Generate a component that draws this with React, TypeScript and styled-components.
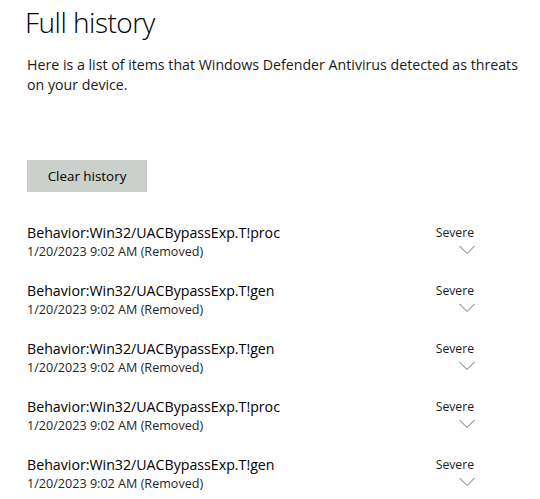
import React from "react";
import styled, { createGlobalStyle } from "styled-components";

const Global = createGlobalStyle`
  html, body { margin: 0; padding: 0; background: #ffffff; }
  body { font-family: "Open Sans", "Noto Sans", Arial, sans-serif; color: #000; }
`;

const Page = styled.div`
  width: 540px;
  height: 499px;
  overflow: hidden;
  box-sizing: border-box;
  padding: 0 0 0 27px;
  display: flex;
  flex-direction: column;
`;

const Title = styled.h1`
  margin: 4px 0 0 -2px;
  font-size: 28px;
  font-weight: 300;
  line-height: 36px;
  letter-spacing: -0.5px;
  color: #000;
`;

const Description = styled.p`
  margin: 15px 0 0 0;
  width: 500px;
  font-size: 14.2px;
  line-height: 20px;
  color: #1a1a1a;
`;

const ClearButton = styled.button`
  margin-top: 65px;
  width: 120px;
  height: 32px;
  border: none;
  background: #ccd0cc;
  font-family: inherit;
  font-size: 13.4px;
  color: #000;
  padding: 0;
`;

const List = styled.div`
  margin-top: 31px;
  display: flex;
  flex-direction: column;
`;

const Row = styled.div`
  display: flex;
  justify-content: space-between;
  height: 58px;
  width: 448px;
`;

const Info = styled.div`
  display: flex;
  flex-direction: column;
`;

const ThreatName = styled.div`
  font-size: 14.2px;
  line-height: 20px;
  color: #000;
`;

const ThreatDate = styled.div`
  font-size: 12.6px;
  line-height: 18px;
  color: #262626;
`;

const Side = styled.div`
  display: flex;
  flex-direction: column;
  align-items: flex-end;
`;

const Severity = styled.div`
  font-size: 12.2px;
  line-height: 18px;
  color: #1a1a1a;
  margin-top: 1px;
  margin-right: 1px;
`;

const Chevron = styled.svg`
  width: 16px;
  height: 10px;
  margin-top: 3px;
`;

const items = [
  "Behavior:Win32/UACBypassExp.T!proc",
  "Behavior:Win32/UACBypassExp.T!gen",
  "Behavior:Win32/UACBypassExp.T!gen",
  "Behavior:Win32/UACBypassExp.T!proc",
  "Behavior:Win32/UACBypassExp.T!gen",
];

export default function App() {
  return (
    <>
      <Global />
      <Page>
        <Title>Full history</Title>
        <Description>
          Here is a list of items that Windows Defender Antivirus detected as threats on your device.
        </Description>
        <div>
          <ClearButton>Clear history</ClearButton>
        </div>
        <List>
          {items.map((name, i) => (
            <Row key={i}>
              <Info>
                <ThreatName>{name}</ThreatName>
                <ThreatDate>1/20/2023 9:02 AM (Removed)</ThreatDate>
              </Info>
              <Side>
                <Severity>Severe</Severity>
                <Chevron viewBox="0 0 16 10">
                  <path d="M0.5 1 L8 8.5 L15.5 1" fill="none" stroke="#6b6b6b" strokeWidth="1" />
                </Chevron>
              </Side>
            </Row>
          ))}
        </List>
      </Page>
    </>
  );
}
